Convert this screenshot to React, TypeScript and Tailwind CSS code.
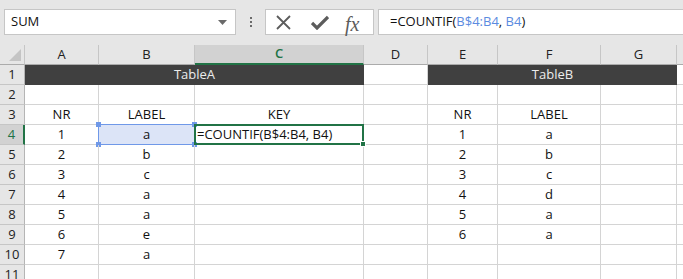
import React from "react";

const GRID = "border-[#d4d4d4]";

function Cell({ w, children, className = "" }: { w: string; children?: React.ReactNode; className?: string }) {
  return (
    <div className={`${w} h-full shrink-0 border-r border-b ${GRID} flex items-center justify-center relative ${className}`}>
      {children}
    </div>
  );
}

const W = {
  rh: "w-[25px]",
  A: "w-[74px]",
  B: "w-[96px]",
  C: "w-[169px]",
  D: "w-[64px]",
  E: "w-[70px]",
  F: "w-[103px]",
  G: "w-[76px]",
  H: "w-[20px]",
};

function RowHead({ n, active = false }: { n: number; active?: boolean }) {
  return (
    <div
      className={
        active
          ? "w-[25px] h-full shrink-0 bg-[#d2d2d2] border-r-2 border-r-[#217346] border-b border-b-[#c6c6c6] flex items-center justify-center text-[#217346] text-[13px]"
          : "w-[25px] h-full shrink-0 bg-[#e6e6e6] border-r border-r-[#b5b5b5] border-b border-b-[#c6c6c6] flex items-center justify-center text-[#222] text-[13px]"
      }
    >
      {n}
    </div>
  );
}

const colB = ["a", "b", "c", "a", "a", "e", "a"];
const colF = ["a", "b", "c", "d", "a", "a"];

export default function App() {
  return (
    <div className="w-[683px] h-[279px] overflow-hidden bg-white text-[#111] text-[13px]" style={{ fontFamily: '"Open Sans", "Noto Sans", sans-serif' }}>
      {/* formula bar */}
      <div className="h-[45px] bg-[#e6e6e6] flex items-start pt-[9px]">
        <div className="ml-[4px] w-[232px] h-[26px] border border-[#c6c6c6] bg-white flex items-center pl-[6px] pr-[8px] shrink-0">
          <span className="text-[13px] text-[#111]">SUM</span>
          <svg className="ml-auto" width="9" height="5" viewBox="0 0 9 5">
            <path d="M0 0 H9 L4.5 5 Z" fill="#6a6a6a" />
          </svg>
        </div>
        <div className="w-[29px] h-[26px] flex flex-col items-center justify-center gap-[2px] shrink-0">
          <div className="w-[2px] h-[2px] bg-[#6a6a6a]" />
          <div className="w-[2px] h-[2px] bg-[#6a6a6a]" />
          <div className="w-[2px] h-[2px] bg-[#6a6a6a]" />
        </div>
        <div className="w-[109px] h-[26px] border border-[#c6c6c6] bg-white flex items-center shrink-0 relative">
          <svg className="absolute left-[10px] top-[5px]" width="15" height="15" viewBox="0 0 15 15">
            <path d="M1 1 L14 14 M14 1 L1 14" stroke="#5c5c5c" strokeWidth="1.8" />
          </svg>
          <svg className="absolute left-[45px] top-[5px]" width="18" height="15" viewBox="0 0 18 15">
            <path d="M1 8 L6 13 L17 2" stroke="#5c5c5c" strokeWidth="3.2" fill="none" />
          </svg>
          <span
            className="absolute left-[79px] top-[-1px] text-[20px] italic text-[#5c5c5c]"
            style={{ fontFamily: '"Liberation Serif", "DejaVu Serif", serif' }}
          >
            fx
          </span>
        </div>
        <div className="ml-[4px] w-[320px] h-[26px] border border-[#c6c6c6] bg-white flex items-center pl-[11px] shrink-0 text-[13px]">
          <span>=COUNTIF(</span>
          <span className="text-[#5b8be0]">B$4:B4</span>
          <span>,&nbsp;</span>
          <span className="text-[#5b8be0]">B4</span>
          <span>)</span>
        </div>
      </div>

      {/* column headers */}
      <div className="h-[20px] flex text-[13px] text-[#222]">
        <div className="w-[25px] h-full shrink-0 bg-[#e6e6e6] border-r border-b border-r-[#c6c6c6] border-b-[#ababab] relative">
          <svg className="absolute left-[9px] top-[4px]" width="12" height="12" viewBox="0 0 12 12">
            <path d="M12 0 L12 12 L0 12 Z" fill="#c4c4c4" />
          </svg>
        </div>
        {[
          ["A", W.A],
          ["B", W.B],
        ].map(([l, w]) => (
          <div key={l} className={`${w} h-full shrink-0 bg-[#e6e6e6] border-r border-b border-r-[#c6c6c6] border-b-[#ababab] flex items-center justify-center`}>
            {l}
          </div>
        ))}
        <div className="w-[169px] h-full shrink-0 bg-[#d2d2d2] border-r border-r-[#c6c6c6] border-b-2 border-b-[#217346] flex items-center justify-center text-[#217346] font-semibold">
          C
        </div>
        {[
          ["D", W.D],
          ["E", W.E],
          ["F", W.F],
          ["G", W.G],
          ["", W.H],
        ].map(([l, w]) => (
          <div key={w} className={`${w} h-full shrink-0 bg-[#e6e6e6] border-r border-b border-r-[#c6c6c6] border-b-[#ababab] flex items-center justify-center`}>
            {l}
          </div>
        ))}
      </div>

      {/* row 1 */}
      <div className="h-[20px] flex">
        <RowHead n={1} />
        <div className="w-[339px] h-full shrink-0 bg-[#404040] border-b border-[#404040] flex items-center justify-center text-[#ececec]">TableA</div>
        <Cell w={W.D} />
        <div className="w-[249px] h-full shrink-0 bg-[#404040] border-b border-[#404040] flex items-center justify-center text-[#ececec]">TableB</div>
        <Cell w={W.H} />
      </div>

      {/* row 2 */}
      <div className="h-[20px] flex">
        <RowHead n={2} />
        <Cell w={W.A} />
        <Cell w={W.B} />
        <Cell w={W.C} />
        <Cell w={W.D} />
        <Cell w={W.E} />
        <Cell w={W.F} />
        <Cell w={W.G} />
        <Cell w={W.H} />
      </div>

      {/* row 3 */}
      <div className="h-[20px] flex">
        <RowHead n={3} />
        <Cell w={W.A}>NR</Cell>
        <Cell w={W.B}>LABEL</Cell>
        <Cell w={W.C}>KEY</Cell>
        <Cell w={W.D} />
        <Cell w={W.E}>NR</Cell>
        <Cell w={W.F}>LABEL</Cell>
        <Cell w={W.G} />
        <Cell w={W.H} />
      </div>

      {/* rows 4..11 */}
      {Array.from({ length: 8 }).map((_, i) => {
        const r = i + 4;
        const idx = i;
        return (
          <div key={r} className="h-[20px] flex">
            <RowHead n={r} active={r === 4} />
            <Cell w={W.A}>{idx < 7 ? idx + 1 : ""}</Cell>
            <Cell w={W.B} className={r === 4 ? "bg-[#dce4f7]" : ""}>
              {idx < 7 ? colB[idx] : ""}
              {r === 4 && (
                <>
                  <div className="absolute left-[-1px] top-[-1px] right-[-1px] bottom-[-1px] border border-[#6f98e8]" />
                  <div className="absolute left-[-3px] top-[-3px] w-[5px] h-[5px] bg-[#6f98e8]" />
                  <div className="absolute right-[-3px] top-[-3px] w-[5px] h-[5px] bg-[#6f98e8]" />
                  <div className="absolute left-[-3px] bottom-[-3px] w-[5px] h-[5px] bg-[#6f98e8]" />
                  <div className="absolute right-[-3px] bottom-[-3px] w-[5px] h-[5px] bg-[#6f98e8]" />
                </>
              )}
            </Cell>
            <Cell w={W.C} className={r === 4 ? "justify-start z-10" : ""}>
              {r === 4 && (
                <>
                  <span className="pl-[2px]">=COUNTIF(B$4:B4, B4)</span>
                  <div className="absolute left-[-1px] top-[-1px] right-[-1px] bottom-[-1px] border-2 border-[#217346]" />
                  <div className="absolute right-[-3px] bottom-[-3px] w-[6px] h-[6px] bg-[#217346] border border-white" />
                </>
              )}
            </Cell>
            <Cell w={W.D} />
            <Cell w={W.E}>{idx < 6 ? idx + 1 : ""}</Cell>
            <Cell w={W.F}>{idx < 6 ? colF[idx] : ""}</Cell>
            <Cell w={W.G} />
            <Cell w={W.H} />
          </div>
        );
      })}
    </div>
  );
}
